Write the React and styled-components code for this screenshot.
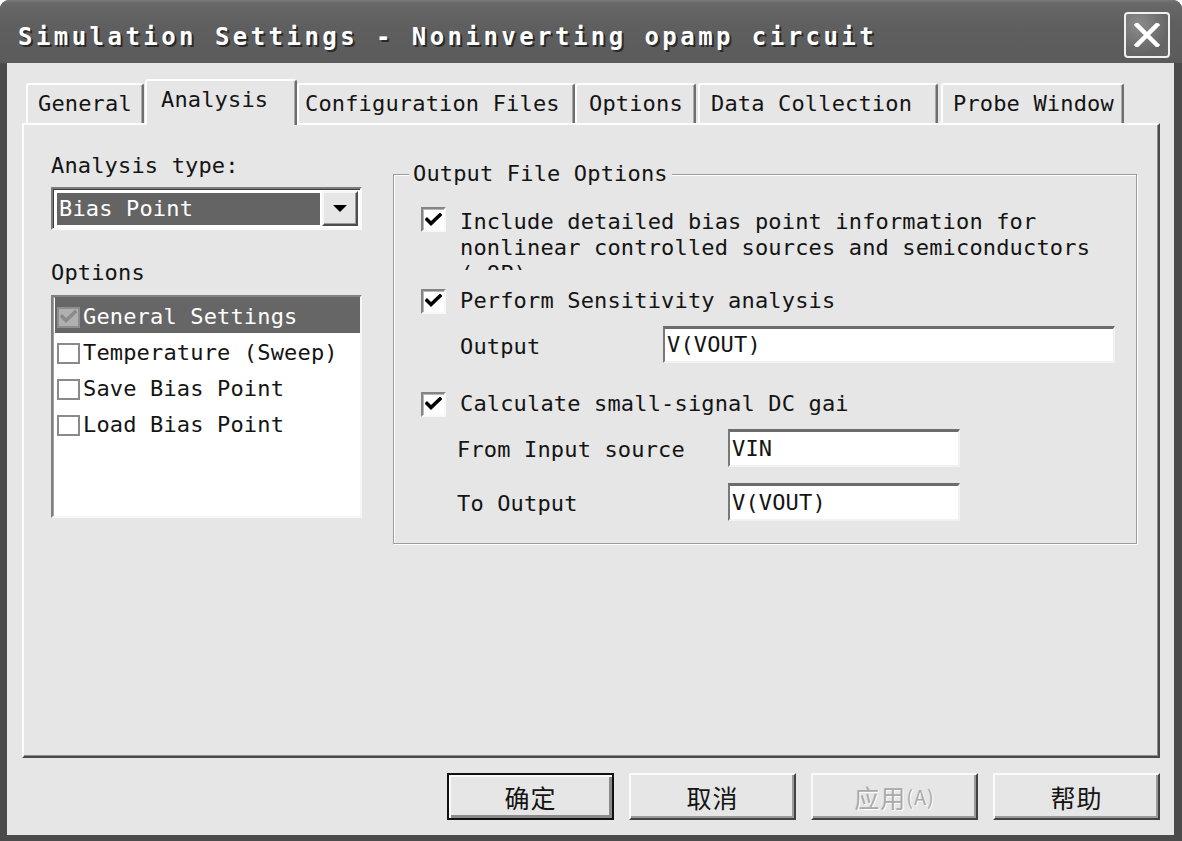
import React from 'react';
import styled, { createGlobalStyle, css } from 'styled-components';

const MONO = `"DejaVu Sans Mono", "Liberation Mono", monospace`;
const CJK = `"Noto Sans CJK SC", "Noto Sans CJK TC", sans-serif`;

const Global = createGlobalStyle`
  html, body { margin: 0; padding: 0; background: #fff; }
  body { width: 1182px; height: 841px; overflow: hidden; }
  *, *::before, *::after { box-sizing: border-box; }
`;

const monoText = css`
  font-family: ${MONO};
  font-size: 22px;
  line-height: 26px;
  letter-spacing: 0.16px;
  color: #141414;
  white-space: nowrap;
`;

const Window = styled.div`
  width: 1182px;
  height: 841px;
  display: flex;
  flex-direction: column;
  background: #4b4b4b;
  border-radius: 9px 9px 0 0;
  overflow: hidden;
`;

const TitleBar = styled.div`
  height: 63px;
  flex: none;
  display: flex;
  align-items: flex-start;
  justify-content: space-between;
  padding: 12px 12px 0 18px;
  background: linear-gradient(#7a7a7a 0, #686868 3px, #5f5f5f 24px, #5b5b5b 100%);
`;

const TitleText = styled.div`
  font-family: ${MONO};
  font-weight: bold;
  font-size: 24px;
  line-height: 46px;
  padding-top: 2px;
  letter-spacing: 3.45px;
  color: #fff;
  text-shadow: 2px 2px 0 #2a2a2a;
  white-space: nowrap;
`;

const CloseButton = styled.div`
  width: 46px;
  height: 46px;
  border: 2px solid #f0f0f0;
  border-radius: 4px;
  background: radial-gradient(circle at 30% 25%, #8c8c8c, #656565 70%);
  display: flex;
  align-items: center;
  justify-content: center;
`;

const Client = styled.div`
  flex: 1;
  margin: 0 8px 6px 7px;
  background: #e6e6e6;
  padding: 16px 14px 15px 15px;
  display: flex;
  flex-direction: column;
`;

const TabRow = styled.div`
  height: 46px;
  flex: none;
  display: flex;
  align-items: flex-end;
  padding-left: 4px;
  margin-bottom: -2px;
  position: relative;
  z-index: 2;
`;

const Tab = styled.div`
  ${monoText};
  flex: none;
  width: ${(p) => p.$w}px;
  margin-left: ${(p) => p.$ml || 0}px;
  height: ${(p) => (p.$active ? 46 : 40)}px;
  margin-bottom: ${(p) => (p.$active ? 0 : 2)}px;
  padding: 6px 0 0 ${(p) => p.$pl}px;
  background: #e6e6e6;
  border-top: 2px solid #fdfdfd;
  border-left: 2px solid #fdfdfd;
  border-right: 2px solid #6e6e6e;
  box-shadow: inset -1px 0 0 #a8a8a8;
  border-radius: 3px 3px 0 0;
  position: relative;
  z-index: ${(p) => (p.$active ? 2 : 1)};
`;

const Panel = styled.div`
  height: 635px;
  flex: none;
  border-style: solid;
  border-width: 2px;
  border-color: #fdfdfd #4a4a4a #4a4a4a #fdfdfd;
  box-shadow: inset -1px -1px 0 #8c8c8c;
  display: grid;
  grid-template-columns: 311px 744px;
  column-gap: 31px;
  align-items: start;
  padding: 27px 0 0 27px;
`;

const Column = styled.div`
  display: flex;
  flex-direction: column;
`;

const FieldLabel = styled.div`
  ${monoText};
  padding-top: 1px;
  height: 26px;
  margin-bottom: ${(p) => p.$mb}px;
`;

const Combo = styled.div`
  height: 43px;
  margin-bottom: 29px;
  border-style: solid;
  border-width: 2px;
  border-color: #7c7c7c #fafafa #fafafa #7c7c7c;
  box-shadow: inset 1px 1px 0 #3c3c3c;
  background: #fff;
  display: flex;
  align-items: center;
  padding-left: 4px;
  gap: 2px;
`;

const ComboValue = styled.div`
  ${monoText};
  color: #fff;
  width: 263px;
  height: 32px;
  line-height: 32px;
  padding-left: 2px;
  background: #646464;
`;

const ArrowButton = styled.div`
  width: 36px;
  height: 35px;
  background: #e6e6e6;
  border-style: solid;
  border-width: 2px;
  border-color: #f6f6f6 #4e4e4e #4e4e4e #f6f6f6;
  box-shadow: inset -1px -1px 0 #9c9c9c;
  display: flex;
  align-items: center;
  justify-content: center;
`;

const Triangle = styled.div`
  width: 0;
  height: 0;
  border-left: 7px solid transparent;
  border-right: 7px solid transparent;
  border-top: 7px solid #000;
`;

const ListBox = styled.div`
  height: 223px;
  border-style: solid;
  border-width: 2px;
  border-color: #808080 #f6f6f6 #f6f6f6 #808080;
  box-shadow: inset 1px 1px 0 #a0a0a0;
  background: #fff;
  padding-left: 2px;
`;

const ListRow = styled.div`
  ${monoText};
  height: 36px;
  display: flex;
  align-items: center;
  gap: 3px;
  padding: 4px 0 0 2px;
  background: ${(p) => (p.$selected ? '#666' : 'transparent')};
  color: ${(p) => (p.$selected ? '#fff' : '#141414')};
`;

const ListCheck = styled.div`
  width: 23px;
  height: 21px;
  flex: none;
  border: 2px solid ${(p) => (p.$disabled ? '#8e8e8e' : '#8a8a8a')};
  background: ${(p) => (p.$disabled ? '#b0b0b0' : '#fff')};
  display: flex;
  align-items: center;
  justify-content: center;
`;

const Group = styled.fieldset`
  margin: 9px 0 0 0;
  padding: 0;
  min-width: 0;
  height: 383px;
  border: 1px solid #9c9c9c;
  box-shadow: 1px 1px 0 #fff, inset 1px 1px 0 #fff;
`;

const Legend = styled.legend`
  ${monoText};
  margin-left: 15px;
  padding: 0 4px;
  background: #e6e6e6;
`;

const GroupBody = styled.div`
  padding: 20px 20px 0 27px;
  display: flex;
  flex-direction: column;
`;

const CheckRow = styled.div`
  display: flex;
  align-items: ${(p) => (p.$top ? 'flex-start' : 'center')};
  gap: 14px;
  margin-top: ${(p) => p.$mt || 0}px;
`;

const CheckBox = styled.div`
  width: 25px;
  height: 25px;
  flex: none;
  background: #fff;
  border-style: solid;
  border-width: 2px;
  border-color: #858585 #f8f8f8 #f8f8f8 #858585;
  box-shadow: inset 1px 1px 0 #b8b8b8;
  display: flex;
  align-items: center;
  justify-content: center;
`;

const WrapLabel = styled.div`
  ${monoText};
  white-space: normal;
  margin-top: 2px;
  height: 61px;
  overflow: hidden;
`;

const CheckLabel = styled.div`
  ${monoText};
  width: ${(p) => (p.$w ? `${p.$w}px` : 'auto')};
  overflow: hidden;
`;

const FieldRow = styled.div`
  display: flex;
  align-items: center;
  margin-top: ${(p) => p.$mt}px;
  padding-left: ${(p) => p.$pl}px;
`;

const RowLabel = styled.div`
  ${monoText};
  width: ${(p) => p.$w}px;
  padding-top: 4px;
  flex: none;
`;

const TextBox = styled.div`
  ${monoText};
  width: ${(p) => p.$w}px;
  height: ${(p) => p.$h}px;
  flex: none;
  background: #fff;
  border-style: solid;
  border-width: 3px 2px 2px 2px;
  border-color: #6c6c6c #f2f2f2 #f2f2f2 #787878;
  padding-left: 2px;
  display: flex;
  align-items: center;
`;

const ButtonRow = styled.div`
  margin-top: 15px;
  height: 47px;
  flex: none;
  display: flex;
  justify-content: flex-end;
  gap: 15px;
`;

const Button = styled.div`
  width: 167px;
  height: 47px;
  display: flex;
  align-items: center;
  justify-content: center;
  background: #e6e6e6;
  font-family: ${CJK};
  font-size: 25px;
  letter-spacing: 1px;
  color: ${(p) => (p.$disabled ? '#a9a9a9' : '#141414')};
  text-shadow: ${(p) => (p.$disabled ? '1px 1px 0 #fff' : 'none')};
  border-style: solid;
  border-width: 2px;
  ${(p) =>
    p.$default
      ? css`
          border-color: #111;
          box-shadow: inset 2px 2px 0 #fafafa, inset -3px -3px 0 #8a8a8a;
        `
      : css`
          border-color: #fafafa #424242 #424242 #fafafa;
          box-shadow: inset -2px -2px 0 #9a9a9a;
        `}
`;

const Small = styled.span`
  font-size: 20px;
`;

const Check = ({ color = '#000' }) => (
  <svg width="17" height="14" viewBox="0 0 17 14">
    <path d="M2 6.5 L6 10.5 L15 2" stroke={color} strokeWidth="3.6" fill="none" strokeLinecap="square" />
  </svg>
);

const CloseX = () => (
  <svg width="26" height="24" viewBox="0 0 26 24">
    <path d="M3 2 L23 22 M23 2 L3 22" stroke="#fff" strokeWidth="4.5" strokeLinecap="square" />
  </svg>
);

const tabs = [
  { label: 'General', w: 118, ml: 0, pl: 10 },
  { label: 'Analysis', w: 152, ml: 1, pl: 14, active: true },
  { label: 'Configuration Files', w: 278, ml: 0, pl: 6 },
  { label: 'Options', w: 121, ml: 0, pl: 12 },
  { label: 'Data Collection', w: 240, ml: 2, pl: 11 },
  { label: 'Probe Window', w: 183, ml: 3, pl: 10 },
];

const listItems = [
  { label: 'General Settings', selected: true, disabled: true },
  { label: 'Temperature (Sweep)' },
  { label: 'Save Bias Point' },
  { label: 'Load Bias Point' },
];

export default function App() {
  return (
    <>
      <Global />
      <Window>
        <TitleBar>
          <TitleText>Simulation Settings - Noninverting opamp circuit</TitleText>
          <CloseButton>
            <CloseX />
          </CloseButton>
        </TitleBar>
        <Client>
          <TabRow>
            {tabs.map((t) => (
              <Tab key={t.label} $w={t.w} $ml={t.ml} $pl={t.pl} $active={t.active}>
                {t.label}
              </Tab>
            ))}
          </TabRow>
          <Panel>
            <Column>
              <FieldLabel $mb={9}>Analysis type:</FieldLabel>
              <Combo>
                <ComboValue>Bias Point</ComboValue>
                <ArrowButton>
                  <Triangle />
                </ArrowButton>
              </Combo>
              <FieldLabel $mb={10}>Options</FieldLabel>
              <ListBox>
                {listItems.map((it) => (
                  <ListRow key={it.label} $selected={it.selected}>
                    <ListCheck $disabled={it.disabled}>
                      {it.disabled && <Check color="#8a8a8a" />}
                    </ListCheck>
                    {it.label}
                  </ListRow>
                ))}
              </ListBox>
            </Column>
            <Group>
              <Legend>Output File Options</Legend>
              <GroupBody>
                <CheckRow $top>
                  <CheckBox>
                    <Check />
                  </CheckBox>
                  <WrapLabel>
                    Include detailed bias point information for
                    <br />
                    nonlinear controlled sources and semiconductors
                    <br />
                    (.OP)
                  </WrapLabel>
                </CheckRow>
                <CheckRow $mt={18}>
                  <CheckBox>
                    <Check />
                  </CheckBox>
                  <CheckLabel>Perform Sensitivity analysis</CheckLabel>
                </CheckRow>
                <FieldRow $mt={12} $pl={39}>
                  <RowLabel $w={203}>Output</RowLabel>
                  <TextBox $w={452} $h={37}>V(VOUT)</TextBox>
                </FieldRow>
                <CheckRow $mt={28}>
                  <CheckBox>
                    <Check />
                  </CheckBox>
                  <CheckLabel $w={389}>Calculate small-signal DC gain</CheckLabel>
                </CheckRow>
                <FieldRow $mt={12} $pl={36}>
                  <RowLabel $w={271}>From Input source</RowLabel>
                  <TextBox $w={232} $h={38}>VIN</TextBox>
                </FieldRow>
                <FieldRow $mt={16} $pl={36}>
                  <RowLabel $w={271}>To Output</RowLabel>
                  <TextBox $w={232} $h={38}>V(VOUT)</TextBox>
                </FieldRow>
              </GroupBody>
            </Group>
          </Panel>
          <ButtonRow>
            <Button $default>确定</Button>
            <Button>取消</Button>
            <Button $disabled>
              应用<Small>(A)</Small>
            </Button>
            <Button>帮助</Button>
          </ButtonRow>
        </Client>
      </Window>
    </>
  );
}
